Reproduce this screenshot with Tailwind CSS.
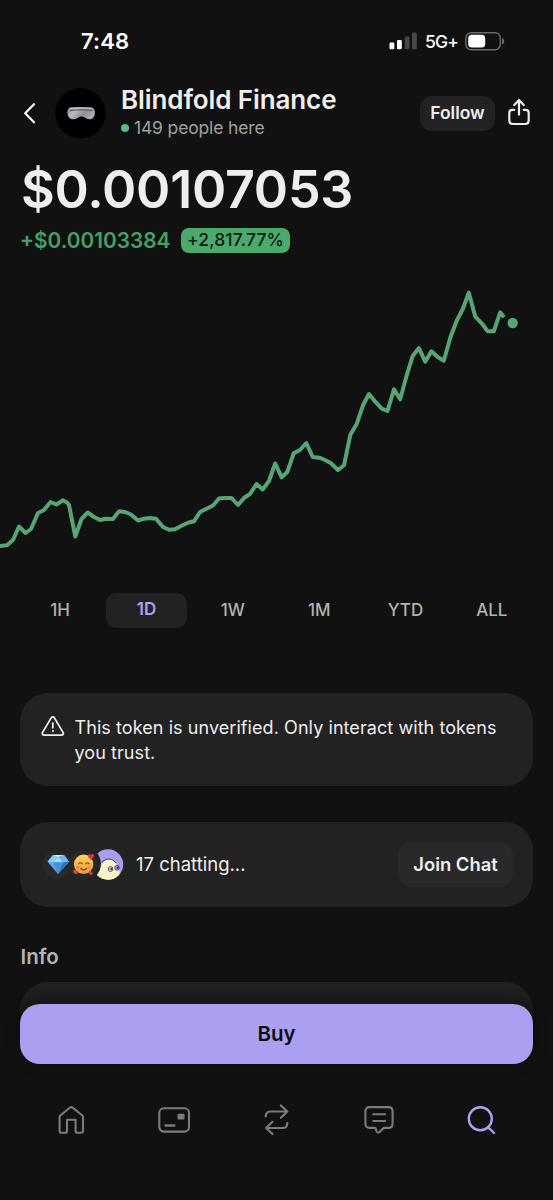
<!DOCTYPE html>
<html lang="en">
<head>
<meta charset="utf-8">
<title>Blindfold Finance</title>
<script src="https://cdn.jsdelivr.net/npm/@tailwindcss/browser@4"></script>
</head>
<body class="bg-[#111111] text-[#eeeeee] font-['Inter',sans-serif]">
<div class="relative w-[553px] h-[1200px] overflow-hidden bg-[#111111] whitespace-nowrap">

  <!-- Status bar -->
  <header class="flex h-[82px] items-center justify-between pl-[81px] pr-[48px]">
    <span class="pt-[1px] text-[22px] font-semibold text-white tracking-[0.1px]">7:48</span>
    <div class="flex items-center">
      <svg class="w-[28px] h-[18px]" viewBox="0 0 28 18">
        <rect x="0.500" y="10.500" width="4.800" height="6.800" rx="1.300" fill="#fff"/>
        <rect x="8" y="8" width="4.800" height="9.300" rx="1.300" fill="#fff"/>
        <rect x="15.700" y="4.500" width="4.800" height="12.800" rx="1.300" fill="#474747"/>
        <rect x="23" y="0.500" width="4.800" height="16.800" rx="1.300" fill="#474747"/>
      </svg>
      <span class="ml-[8px] w-[32px] pt-[2px] text-[17.500px] font-medium text-white tracking-[-0.800px]">5G+</span>
      <svg class="ml-[8px] w-[40px] h-[19px]" viewBox="0 0 40 19">
        <rect x="0.900" y="0.700" width="34.400" height="17" rx="5.200" fill="none" stroke="#6b6b6b" stroke-width="1.400"/>
        <rect x="3.200" y="2.800" width="17" height="12.800" rx="3.600" fill="#fff"/>
        <path d="M37 6c1.600.5 2.200 1.700 2.200 3.200s-.6 2.700-2.200 3.200z" fill="#6b6b6b"/>
      </svg>
    </div>
  </header>

  <!-- Token header -->
  <section class="flex h-[62px] items-center pl-[22px] pr-[22px]">
    <svg class="w-[16px] h-[22px]" viewBox="0 0 16 22" fill="none" stroke="#f4f4f4" stroke-width="2.300" stroke-linecap="round" stroke-linejoin="round"><path d="M12 2.200 3.200 11.200l8.800 9"/></svg>
    <svg class="ml-[17px] w-[51px] h-[51px]" viewBox="0 0 51 51">
      <defs>
        <linearGradient id="visor" x1="0" y1="0" x2="1" y2="0.400">
          <stop offset="0" stop-color="#7d8086"/><stop offset=".35" stop-color="#b9bcc2"/><stop offset=".7" stop-color="#8b8f96"/><stop offset="1" stop-color="#a9abb0"/>
        </linearGradient>
      </defs>
      <circle cx="25.500" cy="25.300" r="25.200" fill="#000"/>
      <path d="M16 19.200h19.500c3 0 4.400 2.100 4.400 5 0 4.300-1.900 7-5 7-2.700 0-3.900-1-5.500-1.900-1.800-1-4.300-1-6 .1-1.500 1-2.800 1.800-5 1.800-3.800 0-6-2.700-6-7 0-3 1.300-5 3.600-5z" fill="url(#visor)"/>
      <path d="M15 22.600c4-1 18-1.200 22.500 0" fill="none" stroke="#4c4e53" stroke-width="1.100"/>
      <path d="M15 20.600c5-.9 16-.9 21.500 0" fill="none" stroke="#d8dade" stroke-width=".8"/>
    </svg>
    <div class="ml-[15px] flex flex-1 flex-col">
      <h1 class="text-[26px] leading-[30px] font-semibold tracking-[-0.100px]">Blindfold Finance</h1>
      <div class="flex items-center text-[17.500px] leading-[26px] tracking-[-0.150px] text-[#a0a0a0]">
        <span class="mr-[5px] size-[8px] rounded-full bg-[#57bb84]"></span>149 people here
      </div>
    </div>
    <button class="h-[35px] w-[75px] rounded-[12px] bg-[#222222] pt-[1px] text-[17.500px] font-semibold">Follow</button>
    <svg class="ml-[12px] w-[24px] h-[28px]" viewBox="0 0 24 28" fill="none" stroke="#ececec" stroke-width="2.200" stroke-linecap="round" stroke-linejoin="round">
      <path d="M12 15.600V1.500M7.300 6 12 1.100l4.700 4.900"/>
      <path d="M7.300 10.800H5.300c-1.900 0-3 1.100-3 3v7.800c0 2.200 1.300 3.400 3.400 3.400h12.600c2.100 0 3.400-1.200 3.400-3.400v-7.800c0-1.900-1.100-3-3-3h-2"/>
    </svg>
  </section>

  <!-- Price -->
  <section class="flex flex-col pl-[20px]">
    <div class="flex h-[92px] items-center pl-[1px] text-[52px] leading-none font-semibold tracking-[-0.250px]"><span>$0.00107053</span></div>
    <div class="-mt-[9px] flex h-[26px] items-center">
      <span class="w-[150px] pt-[2px] text-[20.800px] font-semibold tracking-[0px] text-[#45a065]">+$0.00103384</span>
      <span class="ml-[11px] flex h-[25px] w-[109px] items-center justify-center rounded-[8px] bg-[#4aaa6b] pt-[1px] text-[17.500px] font-medium tracking-[0.150px] text-[#0f1a13]">+2,817.77%</span>
    </div>
  </section>

  <!-- Price chart -->
  <svg class="mt-[27px] block h-[280px] w-[553px]" viewBox="0 280 553 280">
    <polyline fill="none" stroke="#57a474" stroke-width="4" stroke-linejoin="round" points="-2,546.200 7,545.300 13,540 19,526.500 25.500,533 31,529 38,513 44,510 50.500,502 56.500,504.500 62.700,500.300 67,502.500 69,505 75.300,536.500 81.500,519 87.700,512.500 94,517 100,520 106,518.700 113,519 119,511.300 125,512 131,514.500 138,520.500 144,518.700 150,518 156,518.700 163,527 169,529.700 175,529.300 182,525.500 188,522.800 194,521.300 200,512 206,509 213,505.500 219,498.500 225,498 231.500,498 238,505 244,498 250,494 256.500,484 262.700,489.500 269,481 275.200,463.500 281.700,477.300 287.300,472 293.700,453.300 300,450 306.300,443 312.700,457 319.300,457.700 325,460 330.700,463 338,470 344,465.300 350.300,435 356.700,424 363,405.300 369,394 375.300,401.700 381.700,408.700 387.500,411 394,389.300 400.200,399.300 406.300,376.700 412.700,356 418.900,348 425.200,361.700 431.400,351.300 437.700,357 443.800,360.700 450.300,337.700 456.700,320.700 462.700,309.300 468.800,292.700 475.300,316.700 481.700,323.300 487.700,331.300 493.800,331.300 500.200,312.300 504,317.200"/>
    <circle cx="512.700" cy="323" r="5.200" fill="#57a474"/>
  </svg>

  <!-- Time ranges -->
  <nav class="mt-[32px] grid h-[36px] grid-cols-6 pl-[17px] pr-[18px] text-[17px] font-medium text-[#b2b2b2]">
    <span class="flex items-center justify-center pt-[2px]">1H</span>
    <span class="flex items-center justify-center"><span class="flex h-[35px] w-[81px] items-center justify-center rounded-[10px] bg-[#222222] font-semibold text-[#ada0ef]">1D</span></span>
    <span class="flex items-center justify-center pt-[2px]">1W</span>
    <span class="flex items-center justify-center pt-[2px]">1M</span>
    <span class="flex items-center justify-center pt-[2px]">YTD</span>
    <span class="flex items-center justify-center pt-[2px]">ALL</span>
  </nav>

  <!-- Cards -->
  <main class="mt-[65px] flex flex-col px-[20px]">
    <section class="flex h-[93px] rounded-[28px] bg-[#222222] pl-[21px] pt-[22px]">
      <svg class="mt-[1px] h-[22px] w-[24px]" viewBox="0 0 24 22" fill="none" stroke="#eee" stroke-width="1.800" stroke-linecap="round" stroke-linejoin="round">
        <path d="M10.200 1.900 1.600 16.400c-.8 1.400 0 2.700 1.500 2.700h17.400c1.500 0 2.300-1.300 1.500-2.700L13.400 1.900c-.8-1.300-2.400-1.300-3.200 0z"/>
        <path d="M11.800 7.200v4.600"/><circle cx="11.800" cy="15" r=".5" fill="#eee" stroke-width="1"/>
      </svg>
      <p class="ml-[9.500px] text-[18px] leading-[25px] tracking-[0.070px]">This token is unverified. Only interact with tokens<br>you trust.</p>
    </section>

    <section class="mt-[36px] flex h-[85px] items-center rounded-[28px] bg-[#222222] pl-[22px] pr-[20px]">
      <svg class="h-[32px] w-[84px]" viewBox="42 848.500 84 32">
        <defs>
          <linearGradient id="gold" x1="0" y1="0" x2="0" y2="1"><stop offset="0" stop-color="#fbd95c"/><stop offset="1" stop-color="#ee9b35"/></linearGradient>
          <clipPath id="avatar"><path d="M97.500 853A15.200 15.200 0 1 1 97 874.500 18 18 0 0 0 97.500 853z"/></clipPath>
        </defs>
        <circle cx="57" cy="864" r="14.500" fill="#282828"/>
        <circle cx="83" cy="864" r="14.500" fill="#282828"/>
        <path d="M53 854.500h11l5 6.700-11 12.300-10.500-12.300z" fill="#5aa9e8"/>
        <path d="M53 854.500h11l-6 2.200z" fill="#c5e9fb"/>
        <path d="M53 854.500l-5.500 6.700 5.500.6 5-5.100z" fill="#8accf3"/>
        <path d="M64 854.500l-6 2.200 5 5.100 6-.6z" fill="#6fb9ee"/>
        <path d="M53 861.800l5-5.100 5 5.100z" fill="#a7dcf8"/>
        <path d="M53 861.800h10l-5 11.700z" fill="#4794dc"/>
        <path d="M63 861.800l6-.6-11 12.300z" fill="#2f76c4"/>
        <circle cx="83.600" cy="863.800" r="9.700" fill="url(#gold)"/>
        <path d="M78.600 863.400q1.900-2.300 3.700 0M85.600 863.400q1.900-2.300 3.700 0" fill="none" stroke="#7a431c" stroke-width="1.200" stroke-linecap="round"/>
        <path d="M80.800 868q2.800 2.800 5.700 0" fill="none" stroke="#7a431c" stroke-width="1.200" stroke-linecap="round"/>
        <circle cx="78" cy="867" r="1.700" fill="#f07a55" opacity=".7"/><circle cx="89.200" cy="867" r="1.700" fill="#f07a55" opacity=".7"/>
        <path d="M91.300 859.600l-3-2.800c-1.500-2.200 1-4 2.400-2.200 1-2 3.900-1 3.200 1.200z" fill="#e5333a"/>
        <path d="M76.500 873.500c-2.800-.5-4-2.400-2.800-4 1.200-1 2.500-.2 2.300 1 1.400-.6 2.700.5 2.200 1.700z" fill="#e5433a"/>
        <path d="M89.500 873.800c-1.300-1.300-1.200-3.200.3-3.500 1-.2 1.700.6 1.500 1.400 1-.3 2 .6 1.400 1.700-.5.700-1.700 1-3.200.4z" fill="#e5433a"/>
        <g clip-path="url(#avatar)">
          <rect x="92" y="848" width="34" height="32" fill="#a99ded"/>
          <path d="M94 871h5c1.200-2 1.300-3 2-5.500 1.500-5 6-7.500 10.500-6 3.500 1 4.700 2.500 6 5.500l2 5 .5 10H94z" fill="#f7f3c2"/>
          <path d="M101.800 862c3-4.500 10.500-4.800 14.400.6" fill="none" stroke="#393263" stroke-width=".9"/>
          <ellipse cx="110.500" cy="868.500" rx="2.200" ry="2.500" fill="#d9d1f5" stroke="#393263" stroke-width=".8"/>
          <ellipse cx="117" cy="867.300" rx="2.200" ry="2.500" fill="#a99ded" stroke="#393263" stroke-width=".8"/>
          <circle cx="111.300" cy="868.500" r="1.100" fill="#393263"/><circle cx="117.800" cy="867.300" r="1.100" fill="#393263"/>
        </g>
      </svg>
      <span class="ml-[10px] flex-1 text-[18.500px]">17 chatting...</span>
      <button class="h-[45px] w-[115px] rounded-[14px] bg-[#292929] text-[18.400px] font-semibold">Join Chat</button>
    </section>

    <h2 class="mt-[34px] pl-[0.500px] text-[20.500px] leading-[32px] font-semibold text-[#b4b4b4]">Info</h2>
    <div class="mt-[9px] h-[90px] rounded-[28px] bg-linear-to-b from-[#222222] to-[#131313] to-50%"></div>
  </main>

  <!-- Pinned action and tab bar -->
  <footer class="absolute inset-x-0 bottom-0 h-[196px]">
    <div class="px-[20px]">
      <button class="block h-[60px] w-full rounded-[20px] bg-[#aa9ff0] text-[20.500px] font-semibold text-[#0d0d12] shadow-[0_0_14px_rgba(0,0,0,0.350)]">Buy</button>
    </div>
    <nav class="flex h-[136px] items-start justify-between pl-[55px] pr-[56px] pt-[41px]">
      <svg class="h-[32px] w-[32px]" viewBox="0 0 32 32" fill="none" stroke="#7b7b7b" stroke-width="2.100" stroke-linejoin="round"><path d="M14.800 2.700q1.400-1.100 2.800 0L27.700 10.800q.3.300.3.900v14.400c0 1.200-.6 1.700-1.800 1.700h-3.800c-1.200 0-1.800-.6-1.800-1.800V14.800H12V26c0 1.200-.6 1.800-1.800 1.800H6.500c-1.200 0-1.900-.6-1.900-1.800V11.700q0-.6.400-.9z"/></svg>
      <svg class="h-[32px] w-[34px]" viewBox="0 0 34 32" fill="none" stroke="#7b7b7b" stroke-width="2.100"><rect x="2.300" y="3.300" width="29.700" height="23.300" rx="4.500"/><rect x="20.500" y="8.800" width="7" height="5.600" rx="1" fill="#7b7b7b" stroke="none"/><path d="M8.500 20.600h8.800" stroke-width="2.500" stroke-linecap="round"/></svg>
      <svg class="h-[34px] w-[32px] overflow-visible" viewBox="0.500 0.500 32 34" fill="none" stroke="#7b7b7b" stroke-width="2.200" stroke-linecap="round" stroke-linejoin="round"><path d="M5.200 12c0-3.200 1.500-5 4.700-5H26.600M20.400 1l6.400 6-6.400 6.300M26.800 18.500c0 3.200-1.500 5-4.700 5H5.900M12 17.300l-6.400 6.200 6.400 6"/></svg>
      <svg class="h-[32px] w-[32px]" viewBox="-0.500 0.500 32 32" fill="none" stroke="#7b7b7b" stroke-width="2.100" stroke-linecap="round" stroke-linejoin="round"><path d="M6.100 2.600H24.900c2.800 0 4.200 1.400 4.200 4.200v12.400c0 2.800-1.400 4.200-4.200 4.200h-3.700c-.9 0-1.500.4-2 .9l-2.500 2.700c-1.400 1.500-3.700 1.200-3.900-.8l-.2-1.300c-.2-1-.7-1.500-1.700-1.500H6.100c-2.800 0-4.200-1.400-4.200-4.200V6.800C1.900 4 3.300 2.600 6.100 2.600z"/><path d="M9.800 9.700h11.800M9.800 16.500h11.800"/></svg>
      <svg class="h-[32px] w-[32px]" viewBox="0 0 32 32" fill="none" stroke="#ada0ef" stroke-width="2.400" stroke-linecap="round"><circle cx="15.300" cy="13.800" r="11.500"/><path d="m23.200 22.300 5.900 5.700"/></svg>
    </nav>
  </footer>
</div>
</body>
</html>
